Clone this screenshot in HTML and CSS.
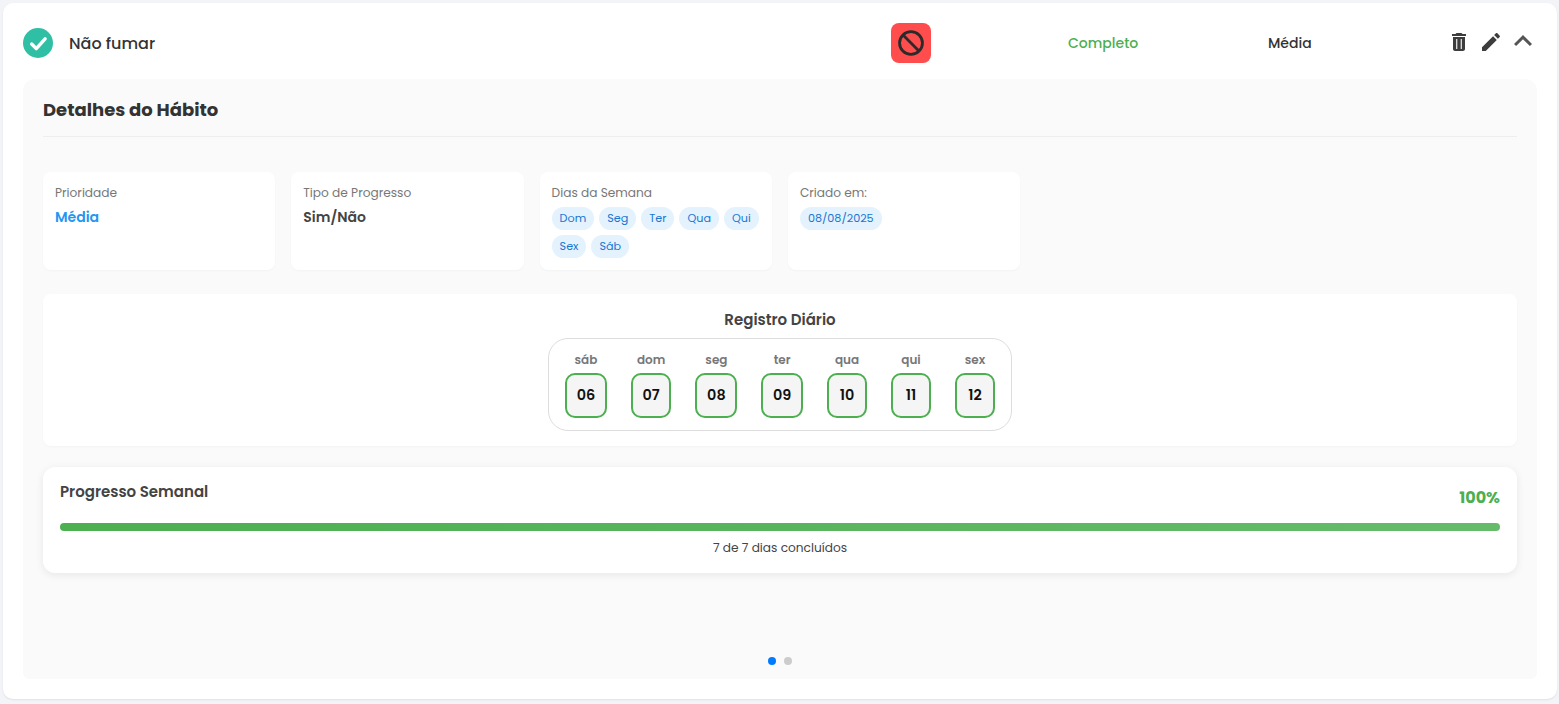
FILE: index.html
```html
<!DOCTYPE html>
<html lang="pt">
<head>
<meta charset="utf-8">
<title>Não fumar</title>
<link rel="stylesheet" href="styles.css">
</head>
<body>
<main class="card">
  <header class="head">
    <svg class="check" viewBox="0 0 30 30"><circle cx="15" cy="15" r="15" fill="#2ebfa5"/><path d="M8.7 16l4.6 4.6 8.8-9.8" fill="none" stroke="#fff" stroke-width="3.4" stroke-linecap="round" stroke-linejoin="round"/></svg>
    <h1 class="name">Não fumar</h1>
    <div class="badge"><svg viewBox="0 0 24 24" width="28" height="28"><circle cx="12" cy="12" r="9.8" fill="none" stroke="#2a2a2a" stroke-width="2.4"/><path d="M5 5l14 14" stroke="#2a2a2a" stroke-width="2.4"/></svg></div>
    <span class="status">Completo</span>
    <span class="level">Média</span>
    <div class="actions">
      <svg viewBox="0 0 24 24" width="24" height="24"><path fill="#3d3d3d" fill-rule="evenodd" d="M6 19c0 1.1.9 2 2 2h8c1.1 0 2-.9 2-2V7H6v12zM9.2 9h1.1v10H9.2zm4.5 0h1.1v10h-1.1zM19 4h-3.5l-1-1h-5l-1 1H5v2h14V4z"/></svg>
      <svg viewBox="0 0 24 24" width="24" height="24"><path fill="#3d3d3d" d="M3 17.25V21h3.75L17.81 9.94l-3.75-3.75L3 17.25zM20.71 7.04c.39-.39.39-1.02 0-1.41l-2.34-2.34c-.39-.39-1.02-.39-1.41 0l-1.83 1.83 3.75 3.75 1.83-1.83z"/></svg>
      <svg class="chevron" viewBox="4 6 16 12" width="24" height="18"><path fill="#555" d="M7.41 15.41 12 10.83l4.59 4.58L18 14l-6-6-6 6z"/></svg>
    </div>
  </header>
  <section class="panel">
    <h2 class="panel-title">Detalhes do Hábito</h2>
    <div class="info-grid">
      <div class="info"><div class="label">Prioridade</div><div class="value blue">Média</div></div>
      <div class="info"><div class="label">Tipo de Progresso</div><div class="value">Sim/Não</div></div>
      <div class="info"><div class="label">Dias da Semana</div>
        <div class="chips"><span class="chip">Dom</span><span class="chip">Seg</span><span class="chip">Ter</span><span class="chip">Qua</span><span class="chip">Qui</span><span class="chip">Sex</span><span class="chip">Sáb</span></div></div>
      <div class="info"><div class="label">Criado em:</div><div class="chips"><span class="chip">08/08/2025</span></div></div>
    </div>
    <div class="daily">
      <h3 class="daily-title">Registro Diário</h3>
      <div class="days">
        <div class="day"><span class="dow">sáb</span><span class="num">06</span></div>
        <div class="day"><span class="dow">dom</span><span class="num">07</span></div>
        <div class="day"><span class="dow">seg</span><span class="num">08</span></div>
        <div class="day"><span class="dow">ter</span><span class="num">09</span></div>
        <div class="day"><span class="dow">qua</span><span class="num">10</span></div>
        <div class="day"><span class="dow">qui</span><span class="num">11</span></div>
        <div class="day"><span class="dow">sex</span><span class="num">12</span></div>
      </div>
    </div>
    <div class="progress">
      <div class="progress-top"><h3 class="progress-title">Progresso Semanal</h3><span class="pct">100%</span></div>
      <div class="bar"><div class="fill"></div></div>
      <p class="note">7 de 7 dias concluídos</p>
    </div>
    <div class="dots"><span class="dot on"></span><span class="dot"></span></div>
  </section>
</main>
</body>
</html>
```
FILE: styles.css
```css
* { box-sizing: border-box; }
html, body { height: 100%; }
body { margin: 0; padding: 3px 2px 5px 3px; background: #f3f4f8; font-family: Poppins, Inter, "Noto Sans", sans-serif; color: #333; overflow: hidden; }
h1, h2, h3, p { margin: 0; }
.card { height: 696px; background: #fff; border-radius: 10px; box-shadow: 0 1px 2px rgba(0,0,0,.08); padding: 0 20px 20px 20px; display: flex; flex-direction: column; }
.head { height: 76px; display: flex; align-items: center; flex: none; }
.check { width: 30px; height: 30px; flex: none; margin-top: 4px; }
.name { font-size: 16px; font-weight: 500; margin: 4px 0 0 16px; width: 822px; color: #333; }
.badge { width: 40px; height: 40px; background: #ff4d4d; border-radius: 8px; display: flex; align-items: center; justify-content: center; margin-top: 4px; flex: none; }
.status { font-size: 14px; font-weight: 500; color: #4caf50; margin: 4px 0 0 137px; width: 200px; }
.level { font-size: 14px; font-weight: 500; margin-top: 4px; width: 179px; color: #333; }
.actions { display: flex; align-items: center; gap: 8px; margin-top: 2px; flex: none; }
.chevron { margin-bottom: 2px; }
.panel { flex: 1; background: #fafafa; border-radius: 12px 12px 6px 6px; padding: 20px; display: flex; flex-direction: column; position: relative; }
.panel-title { font-size: 18px; font-weight: 700; line-height: 22px; padding-bottom: 15px; border-bottom: 1px solid #eee; color: #333; }
.info-grid { display: grid; grid-template-columns: repeat(4, 232.3px); gap: 16px; margin-top: 35px; }
.info { height: 98px; background: #fff; border-radius: 8px; padding: 12px; box-shadow: 0 1px 2px rgba(0,0,0,.03); }
.label { font-size: 12.16px; line-height: 18px; color: #777; }
.value { font-size: 14px; font-weight: 600; line-height: 20px; margin-top: 5px; color: #444; }
.blue { color: #2196f3; }
.chips { display: flex; flex-wrap: wrap; gap: 5px; margin-top: 5px; }
.chip { font-size: 11.2px; line-height: 17px; padding: 3px 8px; background: #e3f2fd; color: #1976d2; border-radius: 12px; }
.daily { height: 152px; margin-top: 24px; background: #fff; border-radius: 8px; display: flex; flex-direction: column; align-items: center; padding-top: 16px; box-shadow: 0 1px 2px rgba(0,0,0,.03); flex: none; }
.daily-title { font-size: 15px; font-weight: 600; line-height: 20px; color: #444; }
.days { display: flex; margin-top: 8px; padding: 12px 16px; width: 464px; height: 93px; border: 1px solid #ddd; border-radius: 20px; justify-content: space-between; }
.day { display: flex; flex-direction: column; align-items: center; gap: 4px; }
.dow { font-size: 12px; font-weight: 600; line-height: 18px; color: #777; }
.num { height: 45px; min-width: 40px; padding: 0 9.7px; border: 2px solid #4caf50; border-radius: 10px; background: #f5f5f5; color: #111; font-size: 14.4px; font-weight: 600; display: flex; align-items: center; justify-content: center; }
.progress { height: 106px; margin-top: 21px; background: #fff; border-radius: 12px; padding: 15px 17px; box-shadow: 0 2px 8px rgba(0,0,0,.08); flex: none; }
.progress-top { display: flex; justify-content: space-between; height: 41px; }
.progress-title { font-size: 15px; font-weight: 600; line-height: 20px; color: #444; }
.pct { font-size: 16px; font-weight: 700; color: #4caf50; line-height: 20px; margin-top: 6px; }
.bar { height: 8px; border-radius: 4px; background: #eee; overflow: hidden; }
.fill { height: 100%; background: linear-gradient(90deg, #4caf50, #66bb6a); }
.note { font-size: 12.16px; line-height: 18px; text-align: center; color: #444; margin-top: 8px; }
.dots { position: absolute; left: 0; right: 0; bottom: 14px; display: flex; justify-content: center; gap: 8px; }
.dot { width: 8px; height: 8px; border-radius: 50%; background: #ccc; }
.dot.on { background: #007bff; }
```
